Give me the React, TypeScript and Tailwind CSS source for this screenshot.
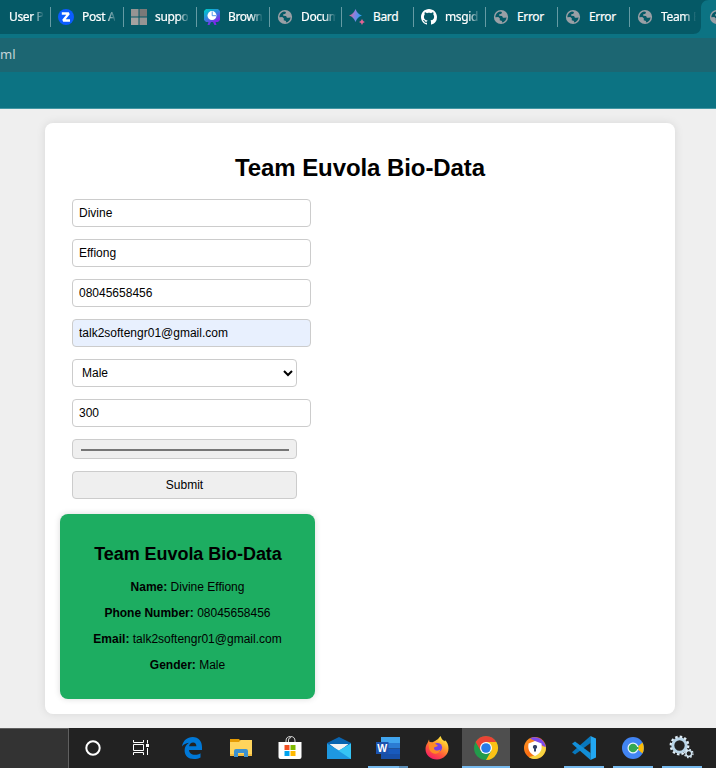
import React from "react";

const Globe = () => (
  <svg viewBox="0 0 16 16" className="h-4 w-4 shrink-0">
    <circle cx="8" cy="8" r="7.1" fill="#9aa0a6" />
    <path d="M2.3 8.2C2.4 5.3 4.2 3 7 2.4L9 3l-.6 1.7L6 5.4l.1 1.2 3 .3.8 1.8 2.4.1 1.2-.6c0 2.8-2 5-4.6 5.4l.1-1.5-2.3-.9.2-1.7L5.3 8z" fill="#055966" />
    <path d="M6.2 6.3l3.6-1.5 1.5-1.7 2 2.8-.7 1.5-1.8-.4-2-.2z" fill="#9aa0a6" />
  </svg>
);
const Zed = () => (
  <svg viewBox="0 0 16 16" className="h-4 w-4 shrink-0">
    <circle cx="8" cy="8" r="8" fill="#0b5cff" />
    <path d="M3.800 4.500h7L5.200 11.500H12" fill="none" stroke="#fff" strokeWidth="2.400" strokeLinejoin="bevel" />
  </svg>
);
const Squares = () => (
  <svg viewBox="0 0 16 16" className="h-4 w-4 shrink-0">
    <path d="M0 0h7.500v7.500H0zM8.500 8.500H16V16H8.500z" fill="#969493" />
    <path d="M8.500 0H16v7.500H8.500z" fill="#7b7978" />
    <path d="M0 8.500h7.500V16H0z" fill="#a4a2a0" />
  </svg>
);
const Present = () => (
  <svg viewBox="0 0 16 16" className="h-4 w-4 shrink-0">
    <defs>
      <linearGradient id="pres" x1="0" y1="0" x2=".6" y2="1">
        <stop offset=".1" stopColor="#00c4cc" />
        <stop offset=".5" stopColor="#2f86e0" />
        <stop offset=".9" stopColor="#7d2ae8" />
      </linearGradient>
    </defs>
    <path d="M2 0h12l2 2v9l-2 2h-2.500l1 3h-2L9 13H7l-1.500 3h-2l1-3H2l-2-2V2z" fill="url(#pres)" />
    <circle cx="8" cy="6.600" r="4.500" fill="#fff" />
    <path d="M8.200 2.500v4.200h4" fill="none" stroke="#3f8be8" strokeWidth=".9" />
  </svg>
);
const Spark = () => (
  <svg viewBox="0 0 16 16" className="h-4 w-4 shrink-0">
    <defs>
      <linearGradient id="spark" x1="0" y1=".4" x2="1" y2=".6">
        <stop stopColor="#ed6172" />
        <stop offset=".4" stopColor="#8d80e0" />
        <stop offset="1" stopColor="#18a5f5" />
      </linearGradient>
    </defs>
    <path d="M6.500 0C7.800 3.600 9.400 5.200 13 6.500 9.400 7.800 7.800 9.400 6.500 13 5.200 9.400 3.600 7.800 0 6.500 3.600 5.200 5.200 3.600 6.500 0z" fill="url(#spark)" />
    <path d="M13 9.800c.7 2 1.200 2.500 3.200 3.200-2 .7-2.500 1.200-3.200 3.200-.7-2-1.200-2.500-3.200-3.200 2-.7 2.500-1.200 3.200-3.200z" fill="#e16494" />
  </svg>
);
const Github = () => (
  <svg viewBox="0 0 16 16" className="h-4 w-4 shrink-0">
    <path fill="#fff" d="M8 0C3.580 0 0 3.580 0 8c0 3.540 2.290 6.530 5.470 7.590.4.070.55-.17.55-.38 0-.19-.01-.82-.01-1.490-2.010.37-2.530-.49-2.690-.94-.09-.23-.48-.94-.82-1.130-.28-.15-.68-.52-.01-.53.63-.01 1.080.58 1.230.82.72 1.210 1.870.87 2.330.66.07-.52.28-.87.51-1.070-1.780-.2-3.640-.89-3.640-3.950 0-.87.31-1.590.82-2.150-.08-.2-.36-1.020.08-2.120 0 0 .67-.21 2.200.82.64-.18 1.320-.27 2-.27s1.360.09 2 .27c1.530-1.040 2.200-.82 2.200-.82.44 1.100.16 1.920.08 2.120.51.56.82 1.270.82 2.150 0 3.070-1.870 3.750-3.650 3.950.29.25.54.73.54 1.480 0 1.070-.01 1.930-.01 2.200 0 .21.15.46.55.38A8.010 8.010 0 0 0 16 8c0-4.420-3.580-8-8-8z" />
  </svg>
);

type TabInfo = { label: string; icon: React.ReactNode; width: string; fade: boolean };
const tabs: TabInfo[] = [
  { label: "Post A", icon: <Zed />, width: "w-[73px]", fade: true },
  { label: "suppo", icon: <Squares />, width: "w-[73px]", fade: true },
  { label: "Brown", icon: <Present />, width: "w-[73px]", fade: true },
  { label: "Docum", icon: <Globe />, width: "w-[72px]", fade: true },
  { label: "Bard", icon: <Spark />, width: "w-[72px]", fade: false },
  { label: "msgid", icon: <Github />, width: "w-[72px]", fade: true },
  { label: "Error", icon: <Globe />, width: "w-[72px]", fade: false },
  { label: "Error", icon: <Globe />, width: "w-[72px]", fade: false },
  { label: "Team E", icon: <Globe />, width: "w-[72px]", fade: true },
];

const fadeOut = "[mask-image:linear-gradient(to_right,black_23px,transparent_35px)]";

function TabStrip() {
  return (
    <div className="relative flex h-[34px] bg-[#055966] font-['Noto_Sans','Open_Sans',sans-serif] text-[12px] tracking-[-0.35px] text-white [-webkit-text-stroke:0.2px_white]">
      <div className="flex w-[50px] shrink-0 items-center pl-[9px]">
        <span className={`whitespace-nowrap ${fadeOut}`}>User P</span>
      </div>
      {tabs.map((t, i) => (
        <div key={i} className={`flex shrink-0 items-center ${t.width}`}>
          <div className="mr-[7px] h-5 w-px shrink-0 bg-[#659ba4]" />
          {t.icon}
          <span className={`ml-2 shrink-0 whitespace-nowrap ${t.fade ? fadeOut : ""}`}>{t.label}</span>
        </div>
      ))}
      <div className="absolute top-0 right-0 h-[34px] w-[23px] overflow-hidden">
        <svg viewBox="0 0 23 34" className="h-[34px] w-[23px]">
          <path d="M0 34C5 34 8 31 8 26V8C8 3 11 0 16 0h7v34z" fill="#0c7383" />
        </svg>
        <div className="absolute top-[9px] left-[16px]"><Globe /></div>
      </div>
    </div>
  );
}

const field = "block h-7 w-[239px] rounded-[4px] border border-[#ccc] px-1.5 text-[12px] text-black outline-none";

function BioForm() {
  return (
    <form className="ml-[27px] flex flex-col items-start gap-3">
      <input className={`${field} bg-white`} defaultValue="Divine" />
      <input className={`${field} bg-white`} defaultValue="Effiong" />
      <input className={`${field} bg-white`} defaultValue="08045658456" />
      <input className={`${field} bg-[#e8f0fe]`} defaultValue="talk2softengr01@gmail.com" />
      <select className="block h-7 w-[225px] rounded-[4px] border border-[#ccc] bg-white px-[5px] text-[12px] text-black">
        <option>Male</option>
      </select>
      <input className={`${field} bg-white`} defaultValue="300" />
      <button type="button" className="flex h-5 w-[225px] items-center rounded-[4px] border border-[#ccc] bg-[#efefef] pt-[2px] pr-[7px] pl-2">
        <span className="h-[2px] w-full bg-[#767676]" />
      </button>
      <button type="button" className="h-7 w-[225px] rounded-[4px] border border-[#ccc] bg-[#efefef] text-[12px] text-black">Submit</button>
    </form>
  );
}

const details = [
  ["Name:", "Divine Effiong"],
  ["Phone Number:", "08045658456"],
  ["Email:", "talk2softengr01@gmail.com"],
  ["Gender:", "Male"],
];

function ResultCard() {
  return (
    <section className="mt-[15px] ml-[15px] h-[185px] w-[255px] rounded-lg bg-[#1dad61] pt-[30px] text-center text-black shadow-[0_0_6px_rgba(0,0,0,0.15)]">
      <h2 className="pl-px text-[18px] leading-[21px] font-bold tracking-[-0.06px]">Team Euvola Bio-Data</h2>
      <div className="mt-[15px] flex flex-col gap-3 text-[12px] leading-[14px]">
        {details.map(([k, v]) => (
          <p key={k}><b>{k}</b> {v}</p>
        ))}
      </div>
    </section>
  );
}

const Cortana = () => (
  <svg viewBox="0 0 32 32" className="h-8 w-8"><circle cx="16" cy="16" r="6.700" fill="none" stroke="#fff" strokeWidth="2" /></svg>
);
const TaskView = () => (
  <svg viewBox="0 0 32 32" className="h-8 w-8" fill="none" stroke="#fff" strokeWidth="1">
    <path d="M8.500 8v2.500h10V8M8.500 23v-2.500h10V23M8.500 12.500h10v6h-10zM22.500 8v3.500M22.500 16v7" />
    <path d="M21 12h3v3h-3z" fill="#fff" stroke="none" />
  </svg>
);
const Edge = () => (
  <svg viewBox="0 0 32 32" className="h-8 w-8">
    <path fill="#0078d7" d="M6 14.500C7 8.500 11.300 5 16.600 5 22.800 5 26 9.500 26 15v3H13c.2 3 2.500 4.800 6 4.800 2.100 0 4-.5 5.500-1.500v4.200c-1.900 1-4.100 1.500-6.600 1.500-5.700 0-9.300-3.400-9.300-8.500 0-3.300 1.600-6 4.400-7.700-3 .3-5.400 1.600-7 3.700z" />
    <path d="M13.100 14.200h7.300c0-2.200-1.200-3.700-3.300-3.700s-3.600 1.400-4 3.700z" fill="#222" />
  </svg>
);
const Folder = () => (
  <svg viewBox="0 0 32 32" className="h-8 w-8">
    <path d="M5 7h9l1.500 2H26v4H5z" fill="#e59b04" />
    <path d="M5 10h9l1.500-2H27v16H5z" fill="#ffd45c" />
    <path d="M5 22h22v2H5z" fill="#f2bb3f" />
    <path d="M9 25v-6q0-2 2-2h10q2 0 2 2v6h-4v-4h-6v4z" fill="#3c91cf" />
  </svg>
);
const Store = () => (
  <svg viewBox="0 0 32 32" className="h-8 w-8">
    <path d="M12 10.500V9q0-4.500 4.500-4.500T21 9v1.500M14.500 10V8q0-2.500 2.500-2.500" fill="none" stroke="#d8d8d8" strokeWidth="1" />
    <path d="M4.500 10h23v15q0 2-2 2h-19q-2 0-2-2z" fill="#fff" />
    <path d="M10.500 13h5v5h-5z" fill="#f25022" /><path d="M16.500 13h5v5h-5z" fill="#7fba00" />
    <path d="M10.500 19h5v5h-5z" fill="#00a4ef" /><path d="M16.500 19h5v5h-5z" fill="#ffb900" />
  </svg>
);
const Mail = () => (
  <svg viewBox="0 0 32 32" className="h-8 w-8">
    <path d="M4 11 16 5l12 6v8H4z" fill="#0964b0" />
    <path d="M6.500 12h19L16 19.500z" fill="#f4f4f4" />
    <path d="M4 11.500 16 18.500 28 11.500V27H4z" fill="#1e98e0" />
    <path d="M28 11.500 15.500 18.800 28 27z" fill="#36c5f5" />
  </svg>
);
const Word = () => (
  <svg viewBox="0 0 32 32" className="h-8 w-8">
    <path d="M9 5h19v6H9z" fill="#41a5ee" /><path d="M9 11h19v5.500H9z" fill="#2b7cd3" />
    <path d="M9 16.500h19V22H9z" fill="#185abd" /><path d="M9 22h19v5H9z" fill="#174fa8" />
    <path d="M4 10h12.500v12H4z" fill="#1b52ae" />
    <text x="10.200" y="19.500" textAnchor="middle" fontSize="10.500" fontWeight="700" fill="#fff" fontFamily="Liberation Sans, sans-serif">W</text>
  </svg>
);
const Firefox = () => (
  <svg viewBox="0 0 32 32" className="h-8 w-8">
    <defs>
      <linearGradient id="fire" x1=".8" y1="0" x2=".2" y2="1">
        <stop stopColor="#fff44f" /><stop offset=".3" stopColor="#ffb42b" /><stop offset=".65" stopColor="#ff563b" /><stop offset="1" stopColor="#f5156c" />
      </linearGradient>
    </defs>
    <path d="M8 7.500l.5 2.600 3 .2L14 9l3-2 2.500-3 1.500 3.200 2.500 2 .5-1C26.300 10 27.500 13 27.500 16.500 27.500 22.500 22.500 27 16 27.500 9.500 27.500 4.500 23 4.500 17c0-2.500.8-4.500 2-6z" fill="url(#fire)" />
    <circle cx="16.500" cy="15.500" r="4.600" fill="#7542e5" />
    <path d="M8 12c3-2 6-1 8 1l1 1c-1.500 1-4 .5-4 2.500s4 3 6.500 1c-1 4-5 5-8 3.500-3-1.500-4-5-3.500-9z" fill="#ff8b24" />
  </svg>
);
const Chrome = () => (
  <svg viewBox="0 0 32 32" className="h-8 w-8">
    <circle cx="16" cy="16" r="12" fill="#229b4b" />
    <path d="M5.600 10A12 12 0 0 1 26.400 10H16L10.800 19z" fill="#ea4335" />
    <path d="M26.400 10A12 12 0 0 1 16 28L21.200 19 16 10z" fill="#fbc116" />
    <circle cx="16" cy="16" r="6" fill="#fff" /><circle cx="16" cy="16" r="4.800" fill="#277be8" />
  </svg>
);
const SecureBrowser = () => (
  <svg viewBox="0 0 32 32" className="h-8 w-8">
    <defs><linearGradient id="orb" x1="0" y1="0" x2="1" y2="1"><stop stopColor="#ff9b25" /><stop offset=".5" stopColor="#fb6c12" /><stop offset="1" stopColor="#f4b727" /></linearGradient></defs>
    <circle cx="16" cy="16" r="11" fill="url(#orb)" />
    <path d="M11 6.500C14 4.500 19 4.500 23 8c3 3 4 6 4 9l-4-4-7-4z" fill="#7c4bef" />
    <path d="M27 15c0 7-5 12-12 12 -2-.2-4-1-5-2 7-1 11-4 13-11z" fill="#f6d442" />
    <path d="M16 9l6.500 2.500c1 6-1 10-6.500 12.500-5.500-2.500-7.500-6.500-6.500-12.500z" fill="#fff" />
    <path d="M16 13a2 2 0 0 1 1 3.800V19.500h-2v-2.700A2 2 0 0 1 16 13z" fill="#334064" />
  </svg>
);
const VsCode = () => (
  <svg viewBox="0 0 32 32" className="h-8 w-8">
    <path d="M22.500 4v7L7 22.500l-3-2.300z" fill="#0878be" />
    <path d="M22.500 28v-7L7 9.500l-3 2.300z" fill="#138fd8" />
    <path d="M22.500 4 28 6.500v19L22.500 28z" fill="#22a7f2" />
  </svg>
);
const Chromium = () => (
  <svg viewBox="0 0 32 32" className="h-8 w-8">
    <circle cx="16" cy="16" r="11" fill="#4285f4" />
    <path d="M19 16l6.500-5.500q2.500 5.500 0 11z" fill="#fbbc05" />
    <circle cx="16" cy="16" r="5.500" fill="#e8f5ff" /><circle cx="16" cy="16" r="4.300" fill="#34a853" />
    <path d="M19 15h2.500v2H19z" fill="#34a853" />
  </svg>
);
const Gears = () => (
  <svg viewBox="0 0 32 32" className="h-8 w-8" fill="none">
    <circle cx="13.500" cy="13.500" r="6.700" stroke="#b9d5e8" strokeWidth="3" />
    <circle cx="13.500" cy="13.500" r="8.800" stroke="#e2eff8" strokeWidth="2.200" strokeDasharray="2.500 2.100" />
    <circle cx="22.800" cy="21.500" r="2.900" stroke="#cfe3f0" strokeWidth="1.500" />
    <circle cx="22.800" cy="21.500" r="4.200" stroke="#d9e9f4" strokeWidth="1.300" strokeDasharray="1.600 1.700" />
  </svg>
);

const Line = () => <div className="absolute bottom-0 left-1 h-[2px] w-10 bg-[#76b9ed]" />;

function Taskbar() {
  const slot = "relative flex h-10 w-12 shrink-0 items-center justify-center";
  return (
    <footer className="flex h-10 bg-[#222]">
      <div className="w-[69px] shrink-0 border-t border-r border-[#606060] bg-[#333]" />
      <div className={slot}><Cortana /></div>
      <div className={slot}><TaskView /></div>
      <div className="ml-[3px] flex gap-px">
        <div className={slot}><Edge /></div>
        <div className={slot}><Folder /></div>
        <div className={slot}><Store /></div>
        <div className={slot}><Mail /></div>
        <div className={slot}><Word /><Line /><div className="absolute right-1 bottom-0 h-[2px] w-[9px] bg-[#5c8fb8]" /></div>
        <div className={slot}><Firefox /></div>
        <div className={`${slot} bg-[#4e4e4e]`}><Chrome /><div className="absolute bottom-0 left-0 h-[2px] w-12 bg-[#76b9ed]" /></div>
        <div className={slot}><SecureBrowser /></div>
        <div className={slot}><VsCode /><Line /></div>
        <div className={slot}><Chromium /><Line /></div>
        <div className={slot}><Gears /><Line /></div>
      </div>
    </footer>
  );
}

export default function App() {
  return (
    <div className="flex h-[768px] w-[716px] flex-col overflow-hidden bg-[#efefef] font-['Liberation_Sans',Arial,sans-serif]">
      <header className="h-[109px] shrink-0 border-b border-[#4396a3] bg-[#0c7383]">
        <TabStrip />
        <div className="mt-1 flex h-[34px] items-center bg-[#1c6672] font-['Noto_Sans','Open_Sans',sans-serif] text-[13px] text-[#c3d5d8]">ml</div>
      </header>
      <main className="h-[619px] pt-[14px] pl-[45px]">
        <div className="h-[591px] w-[630px] rounded-lg bg-white pt-[31px] shadow-[0_0_10px_rgba(0,0,0,0.1)]">
          <h1 className="mb-[17px] text-center text-[24px] leading-[28px] font-bold tracking-[-0.08px] text-black">Team Euvola Bio-Data</h1>
          <BioForm />
          <ResultCard />
        </div>
      </main>
      <Taskbar />
    </div>
  );
}
